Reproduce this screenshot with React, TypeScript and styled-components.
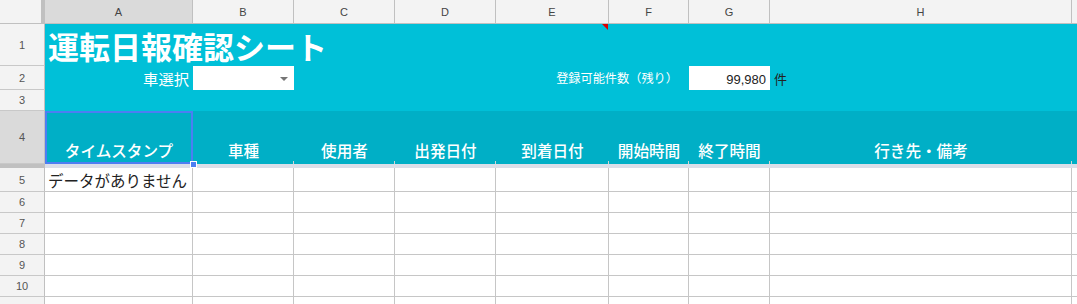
import styled, { createGlobalStyle } from "styled-components";

const GlobalStyle = createGlobalStyle`
  html, body {
    margin: 0;
    padding: 0;
    background: #ffffff;
    overflow: hidden;
  }
  * {
    box-sizing: border-box;
  }
`;

const COLUMNS = ["A", "B", "C", "D", "E", "F", "G", "H", "I"];
const HEADINGS = ["タイムスタンプ", "車種", "使用者", "出発日付", "到着日付", "開始時間", "終了時間", "行き先・備考"];
const EMPTY_ROWS = [6, 7, 8, 9, 10];

function App() {
  return (
    <>
      <GlobalStyle />
      <Sheet>
        <Corner />
        {COLUMNS.map((c) => (
          <ColHeader key={c} $active={c === "A"}>
            {c === "I" ? "" : c}
          </ColHeader>
        ))}

        <RowHeader>1</RowHeader>
        <Title $span={4}>運転日報確認シート</Title>
        <Band>
          <CommentMark />
        </Band>
        <Band $span={4} />

        <RowHeader>2</RowHeader>
        <Label $size={15.3}>車選択</Label>
        <Dropdown>
          <Caret />
        </Dropdown>
        <Band $span={2} />
        <Label $span={2} $size={12.2} $pad={11}>
          登録可能件数（残り）
        </Label>
        <ValueBox>99,980</ValueBox>
        <Unit>件</Unit>
        <Band />

        <RowHeader>3</RowHeader>
        <Band $span={9} />

        <RowHeader $active>4</RowHeader>
        {HEADINGS.map((h, i) =>
          i === 0 ? (
            <SelectedHead key={h}>
              {h}
              <Handle />
            </SelectedHead>
          ) : (
            <HeadCell key={h}>{h}</HeadCell>
          )
        )}
        <HeadCell />

        <FreezeHead />
        <FreezeBar />

        <RowHeader>5</RowHeader>
        <Cell>データがありません</Cell>
        {COLUMNS.slice(1).map((c) => (
          <Cell key={c} />
        ))}

        {EMPTY_ROWS.map((r) => (
          <Row key={r} label={String(r)} />
        ))}
        {/* row 11 is only a sliver at the bottom edge; its number falls below the fold */}
        <Row label="" />
      </Sheet>
    </>
  );
}

function Row({ label }: { label: string }) {
  return (
    <>
      <RowHeader>{label}</RowHeader>
      {COLUMNS.map((c) => (
        <Cell key={c} />
      ))}
    </>
  );
}

export default App;

const Sheet = styled.div`
  display: grid;
  grid-template-columns: 45px 148px 101px 101px 101px 113px 80px 81px 302px 1fr;
  grid-template-rows: 24px 42px 24px 21px 53px 4px 24px repeat(6, 21px);
  width: 1077px;
  height: 304px;
  overflow: hidden;
  font-family: "Noto Sans CJK JP", "Noto Sans", sans-serif;
`;

const Corner = styled.div`
  background: #f3f3f3;
  border-right: 4px solid #c0c0c0;
  border-bottom: 1px solid #c0c0c0;
`;

const ColHeader = styled.div<{ $active?: boolean }>`
  display: flex;
  align-items: center;
  justify-content: center;
  background: ${(p) => (p.$active ? "#dadada" : "#f3f3f3")};
  border-right: 1px solid #c0c0c0;
  border-bottom: 1px solid #c0c0c0;
  font-family: "Liberation Sans", Arial, sans-serif;
  font-size: 11px;
  color: #444444;
`;

const RowHeader = styled.div<{ $active?: boolean }>`
  display: flex;
  align-items: center;
  justify-content: center;
  background: ${(p) => (p.$active ? "#dadada" : "#f3f3f3")};
  border-right: 1px solid #c0c0c0;
  border-bottom: 1px solid #c8c8c8;
  font-family: "Liberation Sans", Arial, sans-serif;
  font-size: 11px;
  color: #555555;
`;

const Band = styled.div<{ $span?: number }>`
  grid-column: span ${(p) => p.$span ?? 1};
  position: relative;
  min-width: 0;
  background: #00c0d8;
`;

const Title = styled(Band)`
  display: flex;
  align-items: center;
  padding-left: 3px;
  white-space: nowrap;
  font-size: 31px;
  font-weight: 700;
  color: #ffffff;
`;

const CommentMark = styled.div`
  position: absolute;
  top: 0;
  right: 1px;
  width: 0;
  height: 0;
  border-left: 6px solid transparent;
  border-top: 6px solid #dd0000;
`;

const Label = styled(Band)<{ $size: number; $pad?: number }>`
  display: flex;
  align-items: center;
  justify-content: flex-end;
  padding-right: ${(p) => p.$pad ?? 4}px;
  white-space: nowrap;
  font-size: ${(p) => p.$size}px;
  color: #ffffff;
`;

const Dropdown = styled.div`
  display: flex;
  align-items: center;
  justify-content: flex-end;
  padding-right: 6px;
  background: #ffffff;
`;

const Caret = styled.div`
  width: 0;
  height: 0;
  border-left: 4px solid transparent;
  border-right: 4px solid transparent;
  border-top: 4px solid #757575;
  margin-top: 2px;
`;

const ValueBox = styled.div`
  display: flex;
  align-items: center;
  justify-content: flex-end;
  padding-right: 4px;
  padding-top: 2px;
  background: #ffffff;
  font-family: "Liberation Sans", Arial, sans-serif;
  font-size: 13px;
  color: #222222;
`;

const Unit = styled(Band)`
  display: flex;
  align-items: center;
  padding-left: 4px;
  font-size: 13px;
  color: #222222;
`;

const HeadCell = styled.div`
  position: relative;
  display: flex;
  align-items: flex-end;
  justify-content: center;
  padding-bottom: 3px;
  background: #00afc6;
  white-space: nowrap;
  font-size: 15.6px;
  font-weight: 500;
  color: #ffffff;

  &::after {
    content: "";
    position: absolute;
    right: 0;
    bottom: 0;
    width: 1px;
    height: 3px;
    background: #d4d4d4;
  }
`;

const SelectedHead = styled(HeadCell)`
  z-index: 2;
  box-shadow: inset 0 0 0 2px #4d7ef2;

  &::after {
    display: none;
  }
`;

const Handle = styled.div`
  position: absolute;
  right: -4px;
  bottom: -4px;
  width: 7px;
  height: 7px;
  background: #4d7ef2;
  border: 1px solid #ffffff;
`;

const FreezeHead = styled.div`
  background: #c0c0c0;
`;

const FreezeBar = styled.div`
  grid-column: span 9;
  background: #dadfe9;
`;

const Cell = styled.div`
  display: flex;
  align-items: flex-end;
  padding: 0 3px 1px;
  min-width: 0;
  border-right: 1px solid #c6c6c6;
  border-bottom: 1px solid #c6c6c6;
  white-space: nowrap;
  font-size: 15.5px;
  line-height: 20px;
  color: #222222;
`;
